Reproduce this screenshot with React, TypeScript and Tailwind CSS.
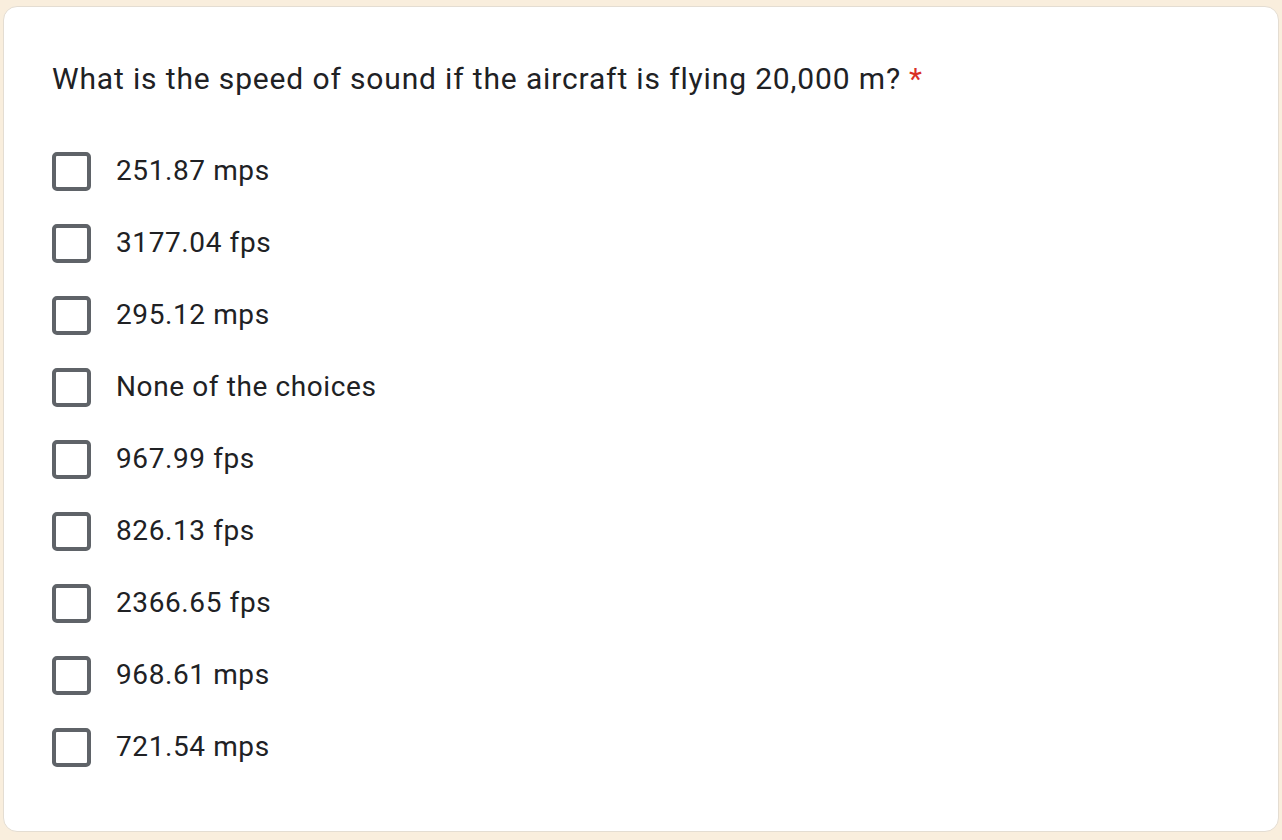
import React from "react";

const options = [
  "251.87 mps",
  "3177.04 fps",
  "295.12 mps",
  "None of the choices",
  "967.99 fps",
  "826.13 fps",
  "2366.65 fps",
  "968.61 mps",
  "721.54 mps",
];

export default function App() {
  return (
    <div
      className="w-[1282px] h-[840px] bg-[#f9eedd] pt-[6px] px-[3px] pb-[8px]"
      style={{ fontFamily: "Roboto, 'Liberation Sans', sans-serif" }}
    >
      <div className="h-full bg-white rounded-[14px] border border-[#e4ddd2] pl-[48px] pt-[52px]">
        <h2 className="text-[30px] leading-[40px] text-[#202124] tracking-[0.85px]">
          What is the speed of sound if the aircraft is flying 20,000 m?
          <span className="text-[#d93025] ml-[8px]">*</span>
        </h2>
        <div className="mt-[53px] flex flex-col gap-[34px]">
          {options.map((o) => (
            <label key={o} className="flex items-center h-[38px]">
              <span className="w-[39px] h-[39px] border-[4px] border-[#5f6368] rounded-[5px] shrink-0" />
              <span className="ml-[25px] text-[28px] text-[#202124] leading-[38px] tracking-[0.6px]">
                {o}
              </span>
            </label>
          ))}
        </div>
      </div>
    </div>
  );
}
